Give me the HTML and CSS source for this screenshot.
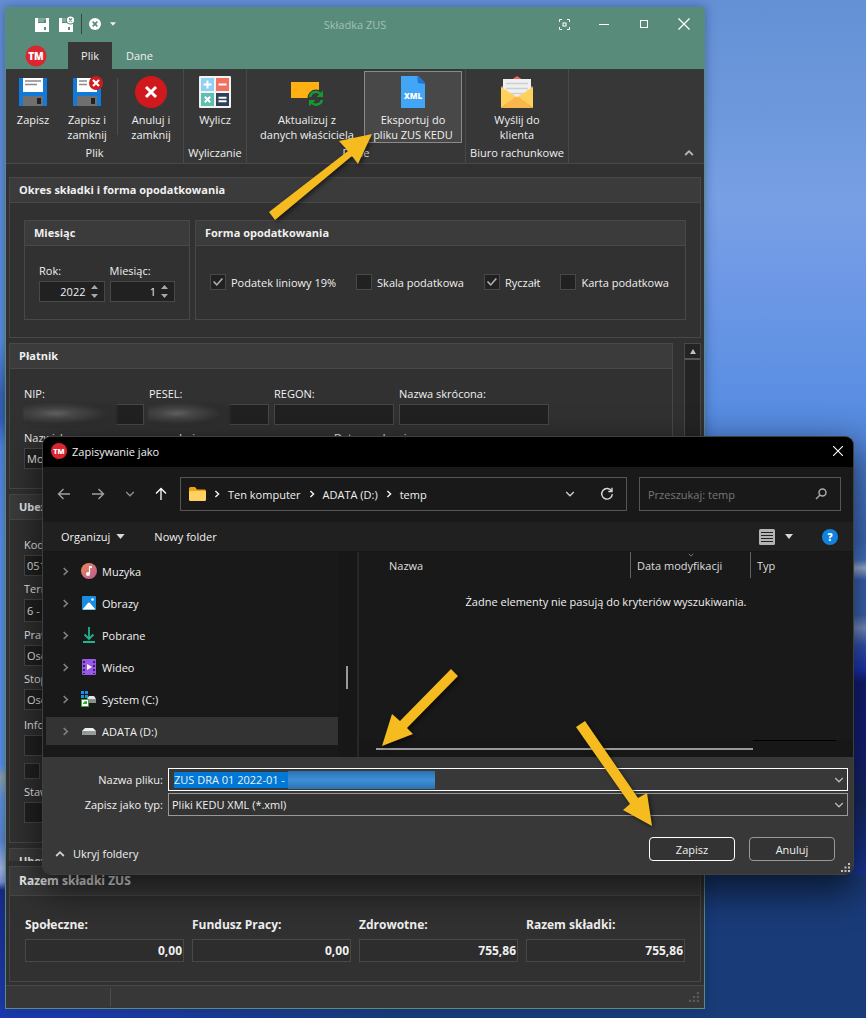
FILE: index.html
```html
<!DOCTYPE html>
<html lang="pl">
<head>
<meta charset="utf-8">
<title>Składka ZUS</title>
<link rel="stylesheet" href="styles.css">
</head>
<body>
<svg class="defs" aria-hidden="true">
  <symbol id="chev-right" viewBox="0 0 10 10"><path d="M3 1.2 7 5 3 8.800" fill="none" stroke="currentColor" stroke-width="1.800"/></symbol>
  <symbol id="chev-down" viewBox="0 0 10 10"><path d="M1.200 3 5 6.800 8.800 3" fill="none" stroke="currentColor" stroke-width="1.300"/></symbol>
  <symbol id="chev-up" viewBox="0 0 10 10"><path d="M1.200 7 5 3.200 8.800 7" fill="none" stroke="currentColor" stroke-width="1.800"/></symbol>
  <symbol id="caret" viewBox="0 0 10 6"><path d="M0 0H10L5 6z" fill="currentColor"/></symbol>
  <symbol id="spin" viewBox="0 0 7 13"><path d="M0 4 3.500 0 7 4zM0 9 3.500 13 7 9z" fill="#a8a8a8"/></symbol>
  <symbol id="grip" viewBox="0 0 9 9"><path d="M7 0h2v2H7zM7 3.500h2v2H7zM3.500 3.500h2v2h-2zM7 7h2v2H7zM3.500 7h2v2h-2zM0 7h2v2H0z" fill="currentColor"/></symbol>
</svg>

<div class="desktop">
  <main class="window">
    <header class="titlebar">
      <div class="quick">
        <button type="button" aria-label="Zapisz"><svg width="15" height="15" viewBox="0 0 15 15"><path d="M0 1h14v14H0z" fill="#fff"/><path d="M3 1h8v5H3z" fill="#588b7a"/><path d="M3 2h8M3 4h6" stroke="#a9c6bb"/><path d="M9 10h2v3H9z" fill="#588b7a"/></svg></button>
        <button type="button" aria-label="Zapisz i zamknij"><svg width="16" height="16" viewBox="0 0 16 16"><path d="M0 2h14v14H0z" fill="#fff"/><path d="M3 2h6v5H3z" fill="#588b7a"/><path d="M3 3h5M3 5h4" stroke="#a9c6bb"/><path d="M9 11h2v3H9z" fill="#588b7a"/><circle cx="11.500" cy="4" r="4.500" fill="#588b7a"/><circle cx="11.500" cy="4" r="3.600" fill="#fff"/><path d="m10 2.500 3 3m0-3-3 3" stroke="#588b7a" stroke-width="1.100"/></svg></button>
        <i class="quick-sep"></i>
        <button type="button" aria-label="Anuluj"><svg width="12" height="12" viewBox="0 0 12 12"><circle cx="6" cy="6" r="6" fill="#fff"/><path d="m3.700 3.700 4.600 4.600m0-4.600L3.700 8.300" stroke="#588b7a" stroke-width="1.700"/></svg></button>
        <button type="button" aria-label="Dostosuj"><svg width="6" height="4"><use href="#caret"/></svg></button>
      </div>
      <h1>Składka ZUS</h1>
      <div class="caption">
        <button type="button" aria-label="Tryb skupienia"><svg width="11" height="11" viewBox="0 0 11 11" fill="none" stroke="#fff"><path d="M.5 3V.5H3M8 .5h2.500V3M10.500 8v2.500H8M3 10.500H.5V8"/><rect x="4" y="4" width="3" height="3"/></svg></button>
        <button type="button" aria-label="Minimalizuj"><svg width="10" height="10"><path d="M0 5.500h10" stroke="#fff"/></svg></button>
        <button type="button" aria-label="Maksymalizuj"><svg width="8" height="8"><rect x=".5" y=".5" width="7" height="7" fill="none" stroke="#fff"/></svg></button>
        <button type="button" aria-label="Zamknij"><svg width="12" height="12"><path d="m.5.5 11 11m0-11-11 11" stroke="#fff" stroke-width="1.300"/></svg></button>
      </div>
    </header>
    <nav class="tabs">
      <svg class="app-logo" width="22" height="22" viewBox="0 0 22 22"><circle cx="11" cy="11" r="10.500" fill="#dc2530"/><text class="mark" x="11" y="15">TM</text></svg>
      <a class="tab active" href="#plik">Plik</a>
      <a class="tab" href="#dane">Dane</a>
    </nav>

    <section class="ribbon">
      <div class="rgroup g-plik">
        <div class="rbuttons">
          <button type="button" class="rb b1"><svg width="32" height="32" viewBox="0 0 32 32"><path d="M2 2h28v28H2z" fill="#1279d8"/><path d="M6 2h20v14H6z" fill="#fff"/><path d="M8 5h16M8 8.500h12" stroke="#8b8b8b" stroke-width="1.500"/><path d="M6 20h20v10H6z" fill="#6f6f6f"/><path d="M20 22h4v6h-4z" fill="#222"/></svg><span>Zapisz</span></button>
          <button type="button" class="rb b2"><svg width="32" height="32" viewBox="0 0 32 32"><path d="M2 2h28v28H2z" fill="#1279d8"/><path d="M6 2h20v14H6z" fill="#fff"/><path d="M8 5h8M8 8.500h8" stroke="#8b8b8b" stroke-width="1.500"/><path d="M6 20h20v10H6z" fill="#6f6f6f"/><path d="M20 22h4v6h-4z" fill="#222"/><circle cx="25" cy="7" r="7" fill="#d01a1e"/><path d="m22 4 6 6m0-6-6 6" stroke="#fff" stroke-width="2.200"/></svg><span>Zapisz i<br>zamknij</span></button>
          <i class="rsep"></i>
          <button type="button" class="rb b3"><svg width="32" height="32" viewBox="0 0 32 32"><circle cx="16" cy="16" r="16" fill="#cf191d"/><path d="m11 11 10 10m0-10L11 21" stroke="#fff" stroke-width="3"/></svg><span>Anuluj i<br>zamknij</span></button>
        </div>
        <h2>Plik</h2>
      </div>
      <div class="rgroup g-wyl">
        <div class="rbuttons">
          <button type="button" class="rb"><svg width="32" height="32" viewBox="0 0 32 32"><rect width="32" height="32" rx="1" fill="#f3f3f3"/><path d="M2 2h13v13H2z" fill="#8fd1f5"/><path d="M17 2h13v13H17z" fill="#f1705f"/><path d="M2 17h13v13H2z" fill="#5ebfae"/><path d="M17 17h13v13H17z" fill="#2f4059"/><path d="M8.500 4.500v8m-4-4h8M19.500 8.500h8M19.500 21.800h8M19.500 25.300h8" stroke="#fff" stroke-width="2"/><path d="m5.800 20.800 5.400 5.400m0-5.400-5.400 5.400" stroke="#fff" stroke-width="2"/></svg><span>Wylicz</span></button>
        </div>
        <h2>Wyliczanie</h2>
      </div>
      <div class="rgroup g-dane">
        <div class="rbuttons">
          <button type="button" class="rb wide"><svg width="32" height="32" viewBox="0 0 32 32"><path d="M0 6h28v16H0z" fill="#ffb012"/><circle cx="25" cy="22" r="8.500" fill="#373737"/><g fill="none" stroke="#149a32" stroke-width="2.400"><path d="M19 21a6 6 0 0 1 10.500-3M31 24a6 6 0 0 1-10.500 2.500"/></g><path d="M32 14.500V21h-6.500zM18 30.500V24h6.500z" fill="#149a32"/></svg><span>Aktualizuj z<br>danych właściciela</span></button>
          <button type="button" class="rb wide hot"><svg width="32" height="32" viewBox="0 0 32 32"><path d="M4 0h17l7 7v25H4z" fill="#42a5f5"/><path d="M20 0l8 7v1l-7-1z" fill="#1976d2"/><text class="mark" x="16" y="23">XML</text></svg><span>Eksportuj do<br>pliku ZUS KEDU</span></button>
        </div>
        <h2>Dane</h2>
      </div>
      <div class="rgroup g-biuro">
        <div class="rbuttons">
          <button type="button" class="rb wide"><svg width="32" height="32" viewBox="0 0 32 32"><path d="M0 11 16 0l16 11v8H0z" fill="#ee6a5b"/><path d="M2 3h28v20H2z" fill="#efefef"/><path d="M5 7.500h22M5 12.500h22M10 17.500h12" stroke="#c9d0d6" stroke-width="1.500"/><path d="M0 11v21L16 21zM32 11v21L16 21z" fill="#ffd15c"/><path d="M0 32 13 22q3-2 6 0l13 10z" fill="#f8b64c"/></svg><span>Wyślij do<br>klienta</span></button>
        </div>
        <h2>Biuro rachunkowe</h2>
      </div>
      <button type="button" class="collapse" aria-label="Zwiń wstążkę"><svg width="10" height="10"><use href="#chev-up"/></svg></button>
    </section>

    <div class="content">
      <section class="panel period">
        <h3>Okres składki i forma opodatkowania</h3>
        <div class="period-body">
          <section class="panel month">
            <h3>Miesiąc</h3>
            <div class="month-body">
              <div class="field"><label for="rok">Rok:</label><div class="spinbox"><input id="rok" value="2022"><svg width="7" height="13"><use href="#spin"/></svg></div></div>
              <div class="field"><label for="mies">Miesiąc:</label><div class="spinbox"><input id="mies" value="1"><svg width="7" height="13"><use href="#spin"/></svg></div></div>
            </div>
          </section>
          <section class="panel form-tax">
            <h3>Forma opodatkowania</h3>
            <div class="checks">
              <label><input type="checkbox" checked>Podatek liniowy 19%</label>
              <label><input type="checkbox">Skala podatkowa</label>
              <label><input type="checkbox" checked>Ryczałt</label>
              <label><input type="checkbox">Karta podatkowa</label>
            </div>
          </section>
        </div>
      </section>

      <div class="scroll">
        <div class="scroll-body">
          <section class="panel payer">
            <h3>Płatnik</h3>
            <div class="rows">
              <div class="row">
                <div class="field id"><label for="nip">NIP:</label><div class="masked"><input id="nip"><i></i></div></div>
                <div class="field id"><label for="pesel">PESEL:</label><div class="masked short"><input id="pesel"><i></i></div></div>
                <div class="field id"><label for="regon">REGON:</label><input id="regon"></div>
                <div class="field long"><label for="skr">Nazwa skrócona:</label><input id="skr"></div>
              </div>
              <div class="row">
                <div class="field long"><label for="nazw">Nazwisko:</label><input id="nazw" value="Mo"></div>
                <div class="field long"><label for="imie">Imię:</label><input id="imie"></div>
                <div class="field long"><label for="ur">Data urodzenia:</label><input id="ur"></div>
              </div>
            </div>
          </section>
          <section class="panel insured">
            <h3>Ubez</h3>
            <div class="rows">
              <div class="field"><label for="kod">Kod</label><input id="kod" value="051"></div>
              <div class="field tall"><label for="term">Term</label><input id="term" value="6 -"></div>
              <div class="field"><label for="prawo">Praw</label><input id="prawo" value="Oso"></div>
              <div class="field"><label for="stop">Stop</label><input id="stop" value="Oso"></div>
              <div class="field spaced"><label for="info">Info</label><input id="info"></div>
              <input class="spaced" type="checkbox" aria-label="Info">
              <div class="field"><label for="staw">Staw</label><input id="staw"></div>
            </div>
          </section>
          <section class="panel next"><h3>Ubez</h3></section>
        </div>
        <div class="vscroll"><button type="button" aria-label="W górę"><svg width="6" height="5" viewBox="0 0 6 5"><path d="M0 5 3 0l3 5z" fill="#c0c0c0"/></svg></button><div class="vthumb"></div></div>
      </div>

      <section class="panel totals">
        <h3>Razem składki ZUS</h3>
        <div class="totals-body">
          <div class="total"><label for="t1">Społeczne:</label><input id="t1" value="0,00" readonly></div>
          <div class="total"><label for="t2">Fundusz Pracy:</label><input id="t2" value="0,00" readonly></div>
          <div class="total"><label for="t3">Zdrowotne:</label><input id="t3" value="755,86" readonly></div>
          <div class="total"><label for="t4">Razem składki:</label><input id="t4" value="755,86" readonly></div>
        </div>
      </section>
    </div>
    <footer class="statusbar"><i></i><svg width="10" height="10"><use href="#grip"/></svg></footer>
  </main>

  <div class="dialog" role="dialog" aria-labelledby="dlg-title">
    <header class="dlg-title">
      <svg width="16" height="16" viewBox="0 0 22 22"><circle cx="11" cy="11" r="11" fill="#dc2530"/><text class="mark" x="11" y="15">TM</text></svg>
      <h2 id="dlg-title">Zapisywanie jako</h2>
      <button type="button" aria-label="Zamknij"><svg width="10" height="10"><path d="m0 0 10 10M10 0 0 10" stroke="#fff" stroke-width="1.100"/></svg></button>
    </header>
    <div class="navbar">
      <div class="nav-buttons">
        <button type="button" aria-label="Wstecz"><svg width="14" height="12" viewBox="0 0 14 12" fill="none" stroke="#a0a0a0" stroke-width="1.400"><path d="M13 6H1.500M6.500 1l-5 5 5 5"/></svg></button>
        <button type="button" aria-label="Dalej"><svg width="14" height="12" viewBox="0 0 14 12" fill="none" stroke="#a0a0a0" stroke-width="1.400"><path d="M1 6h11.500M7.500 1l5 5-5 5"/></svg></button>
        <button type="button" aria-label="Ostatnie"><svg class="grey" width="10" height="10"><use href="#chev-down"/></svg></button>
        <button type="button" aria-label="W górę"><svg width="12" height="14" viewBox="0 0 12 14" fill="none" stroke="#fff" stroke-width="1.300"><path d="M6 13V1.500M1 6.500l5-5 5 5"/></svg></button>
      </div>
      <div class="path">
        <svg width="17" height="14" viewBox="0 0 17 14"><path d="M0 1.500Q0 0 1.500 0H6l2 2.500h7.500Q17 2.500 17 4v3H0z" fill="#f5a30c"/><rect y="4" width="17" height="10" rx="1.200" fill="#ffd062"/></svg>
        <svg width="8" height="8"><use href="#chev-right"/></svg><a href="#pc">Ten komputer</a>
        <svg width="8" height="8"><use href="#chev-right"/></svg><a href="#d">ADATA (D:)</a>
        <svg width="8" height="8"><use href="#chev-right"/></svg><a href="#temp">temp</a>
        <span class="grow"></span>
        <button type="button" aria-label="Historia"><svg width="10" height="10"><use href="#chev-down"/></svg></button>
        <button type="button" aria-label="Odśwież"><svg width="14" height="14" viewBox="0 0 14 14" fill="none" stroke="#d8d8d8" stroke-width="1.400"><path d="M11.500 4A5.300 5.300 0 1 0 12.300 7M12 .8v3.700H8.300"/></svg></button>
      </div>
      <div class="search"><input type="text" placeholder="Przeszukaj: temp" aria-label="Przeszukaj"><svg width="12" height="12" viewBox="0 0 12 12" fill="none" stroke="#a8a8a8" stroke-width="1.500"><circle cx="7.500" cy="4.500" r="3.500"/><path d="M5 7 1 11"/></svg></div>
    </div>
    <div class="toolbar">
      <button type="button" class="organize">Organizuj<svg width="9" height="5"><use href="#caret"/></svg></button>
      <button type="button">Nowy folder</button>
      <span class="grow"></span>
      <button type="button" class="view" aria-label="Widok"><svg width="16" height="16" viewBox="0 0 16 16"><rect width="16" height="16" rx="1.500" fill="#b4b4b4"/><path d="M2 3.500h12M2 6.500h12M2 9.500h12M2 12.500h12" stroke="#222"/></svg><svg width="8" height="5"><use href="#caret"/></svg></button>
      <button type="button" aria-label="Pomoc"><svg width="16" height="16"><circle cx="8" cy="8" r="8" fill="#0f83dd"/><text class="mark help" x="8" y="12">?</text></svg></button>
    </div>
    <div class="browser">
      <ul class="tree">
        <li><svg width="9" height="9"><use href="#chev-right"/></svg><svg width="16" height="16"><defs><linearGradient id="mg" x2="1" y2="1"><stop stop-color="#f08a4b"/><stop offset="1" stop-color="#b45a9c"/></linearGradient></defs><circle cx="8" cy="8" r="8" fill="url(#mg)"/><path d="M8.500 3.500v7" stroke="#fff" stroke-width="1.200"/><circle cx="7" cy="11" r="2" fill="#fff"/><path d="M8 3h3v2H8z" fill="#fff"/></svg><a href="#m">Muzyka</a></li>
        <li><svg width="9" height="9"><use href="#chev-right"/></svg><svg width="16" height="16"><rect x="1" y="1" width="14" height="14" rx="1" fill="#178ce0"/><path d="M1.500 14.500 7 8q1-1 2 0l5.500 6.500z" fill="#fff"/><circle cx="11.500" cy="4.500" r="1.300" fill="#fff"/></svg><a href="#o">Obrazy</a></li>
        <li><svg width="9" height="9"><use href="#chev-right"/></svg><svg width="16" height="16" fill="none" stroke="#1fb58f" stroke-width="1.800"><path d="M8 0v11.500M3.500 7.500 8 12l4.500-4.500M2 15h12"/></svg><a href="#p">Pobrane</a></li>
        <li><svg width="9" height="9"><use href="#chev-right"/></svg><svg width="16" height="16"><rect x="1" width="14" height="16" rx="1" fill="#9a58ea"/><path d="M3 2v13M13 2v13" stroke="#35284f" stroke-width="2" stroke-dasharray="2 2"/><path d="m6 5 5 3-5 3z" fill="#fff"/></svg><a href="#w">Wideo</a></li>
        <li><svg width="9" height="9"><use href="#chev-right"/></svg><svg width="16" height="16"><path d="M0 0h3v3H0zM4 0h3v3H4zM0 4h3v3H0zM4 4h3v3H4z" fill="#1e90e6"/><path d="M8 5h5l2 3H6z" fill="#e4e4e4"/><path d="M7 8h8v4H7z" fill="#8b8b8b"/><path d="M.5 8.500h7v7h-7z" fill="#fff" stroke="#36a839"/><path d="M2 13q0-3 4-3v3z" fill="#36a839"/></svg><a href="#c">System (C:)</a></li>
        <li class="sel"><svg width="9" height="9"><use href="#chev-right"/></svg><svg width="16" height="16"><path d="M4 5h8l3 3H1z" fill="#ededed"/><path d="M1 8h14v4H1z" fill="#9a9a9a"/><path d="M3 9.500h2" stroke="#19c24d"/></svg><a href="#d">ADATA (D:)</a></li>
      </ul>
      <div class="tree-scroll"><i></i></div>
      <div class="files">
        <div class="cols"><span class="c1">Nazwa</span><span class="c2">Data modyfikacji<svg width="8" height="6"><use href="#chev-down"/></svg></span><span class="c3">Typ</span></div>
        <p>Żadne elementy nie pasują do kryteriów wyszukiwania.</p>
        <div class="hscroll"><i></i></div>
      </div>
    </div>
    <div class="dlg-footer">
      <div class="line"><label for="fname">Nazwa pliku:</label><div class="combo active"><input id="fname" value="ZUS DRA 01 2022-01 -"><i class="blurred"></i><span class="grow"></span><svg width="10" height="10"><use href="#chev-down"/></svg></div></div>
      <div class="line"><label for="ftype">Zapisz jako typ:</label><div class="combo"><select id="ftype"><option>Pliki KEDU XML (*.xml)</option></select><svg width="10" height="10"><use href="#chev-down"/></svg></div></div>
      <div class="actions">
        <button type="button" class="hide"><svg width="10" height="10"><use href="#chev-up"/></svg>Ukryj foldery</button>
        <span class="grow"></span>
        <button type="button" class="btn primary">Zapisz</button>
        <button type="button" class="btn">Anuluj</button>
      </div>
      <svg class="dlg-grip" width="9" height="9"><use href="#grip"/></svg>
    </div>
  </div>

  <svg class="arrows" width="866" height="1018" viewBox="0 0 866 1018" aria-hidden="true">
    <g fill="#f5bb1f">
      <path d="m269 212 79-61-9-10 33-7-14 30-6-8-77 64z"/>
      <path d="m382 746 10-32 8 7 51-52 7 7-51 52 6 6z"/>
      <path d="m576 727 9-6 53 77 9-5 5 33-29-16 7-6z"/>
    </g>
  </svg>
</div>
</body>
</html>
```
FILE: styles.css
```css
* { box-sizing: border-box; }
body { margin: 0; font: 11px/15px "Open Sans", "Noto Sans", sans-serif; color: #f0f0f0; }
h1, h2, h3, p, ul { margin: 0; padding: 0; font-size: inherit; font-weight: 400; list-style: none; }
button { background: none; border: 0; padding: 0; color: inherit; font: inherit; display: flex; align-items: center; justify-content: center; }
input, select { font: inherit; color: inherit; margin: 0; min-width: 0; }
a { color: inherit; text-decoration: none; }
svg { flex: none; display: block; }
.defs { position: absolute; width: 0; height: 0; }
.grow { flex: 1; }
.mark { font-size: 10px; font-weight: 800; text-anchor: middle; fill: #fff; }
.rb .mark { font-size: 8px; }

.desktop {
  position: relative;
  height: 100vh;
  min-height: 1018px;
  padding: 7px 161px 9px 5px;
  display: flex;
  overflow: hidden;
  background:
    linear-gradient(90deg, transparent 60px, #193b78 400px) 0 100% / 100% 143px no-repeat,
    linear-gradient(180deg, #648fd3 0, #5b8ee0 340px, #3a62b0 395px, #3560b8 420px, #5385da 445px, #5a90e8 550px, #5a90e8 765px, #8fa3a8 777px, #5f90dc 800px, #5b86d0 840px, #a5b8e0 868px, #7f97d8 882px, #1a2a88 890px, #1d39b0 100%) 0 0 / 5px 100% no-repeat,
    linear-gradient(180deg, #6490d5 0, #6d98dc 110px, #78a0e4 200px, #6f99e6 275px, #5a8ee2 400px, #3f70c4 540px, #4a7ed0 560px, #a8bce2 568px, #3c66bd 580px, #3f69b8 615px, #7f97cc 628px, #3558bd 645px, #1b37b8 670px, #141f78 682px, #161f7c 740px, #152a66 800px, #1c3aa8 890px, #1c39ae 100%);
}

.window {
  flex: 1;
  display: flex;
  flex-direction: column;
  background: #313131;
  border: 1px solid #5a8c7b;
  box-shadow: 0 0 10px rgba(20, 40, 90, .45);
}
.titlebar { height: 34px; padding-bottom: 2px; background: #588b7a; display: grid; grid-template-columns: 1fr auto 1fr; align-items: center; }
.titlebar h1 { color: #a0c1b5; }
.quick { display: flex; align-items: center; padding-left: 29px; gap: 9px; }
.quick-sep { width: 1px; height: 20px; background: #2f4a41; margin: 0 -2px 0 -3px; }
.caption { display: flex; justify-content: flex-end; }
.caption button { width: 40px; height: 30px; }
.tabs { height: 27px; background: #588b7a; display: flex; align-items: center; padding-left: 19px; }
.app-logo { margin-right: 21px; }
.tab { padding: 6px 14px; }
.tab.active { background: #373737; padding: 6px 0; width: 44px; text-align: center; }

.ribbon { height: 95px; display: flex; background: #373737; border-bottom: 1px solid #484848; position: relative; }
.rgroup { display: flex; flex-direction: column; align-items: center; border-right: 1px solid #484848; }
.rgroup h2 { white-space: nowrap; }
.rbuttons { height: 76px; padding-top: 2px; display: flex; justify-content: center; }
.rb { flex-direction: column; justify-content: flex-start; align-items: center; height: 72px; padding-top: 4px; border: 1px solid transparent; gap: 4px; text-align: center; white-space: nowrap; }
.rb.hot { background: #484848; border-color: #8a8a8a; }
.g-plik { width: 178px; }
.g-wyl { width: 63px; }
.g-dane { width: 219px; }
.g-biuro { width: 103px; }
.b1, .b2 { width: 54px; }
.b3 { width: 64px; }
.rsep { width: 1px; height: 57px; background: #4c4c4c; margin: 7px 1px 0 3px; }
.wide { width: 98px; }
.g-dane .rbuttons { gap: 8px; padding-left: 8px; }
.collapse { position: absolute; right: 10px; bottom: 5px; color: #b8b8b8; }

.content { flex: 1; min-height: 0; padding: 13px 3px 3px; display: flex; flex-direction: column; gap: 5px; }
.panel { border: 1px solid #484848; }
.panel h3 { height: 25px; background: #3b3b3b; border-bottom: 1px solid #484848; padding: 4px 9px; font-weight: 700; }
.period-body { padding: 17px 14px; display: flex; gap: 5px; }
.month { width: 166px; height: 100px; }
.form-tax { flex: 1; }
.month-body { padding: 17px 14px; display: flex; gap: 5px; }
.field { display: flex; flex-direction: column; gap: 3px; white-space: nowrap; }
.field input:not([type=checkbox]) { width: 100%; height: 21px; background: #212121; border: 1px solid #484848; padding: 0 2px; }
.month-body .field { width: 66px; }
.spinbox { display: flex; align-items: center; height: 21px; background: #212121; border: 1px solid #484848; padding-right: 6px; gap: 3px; }
.field .spinbox input:not([type=checkbox]) { background: none; border: 0; height: 19px; text-align: right; }
.checks { height: 72px; display: flex; align-items: center; gap: 20px; padding-left: 14px; white-space: nowrap; }
.checks label { display: flex; align-items: center; gap: 5px; }
input[type=checkbox] { appearance: none; width: 16px; height: 16px; background: #212121; border: 1px solid #484848; display: grid; place-content: center; flex: none; }
input[type=checkbox]:checked::before { content: ""; width: 10px; height: 8px; background: #b0b0b0; clip-path: polygon(0 50%, 12% 38%, 38% 72%, 88% 0, 100% 12%, 38% 100%); }

.scroll { flex: 1; min-height: 0; display: flex; gap: 11px; }
.scroll-body { flex: 1; min-width: 0; overflow: hidden; display: flex; flex-direction: column; gap: 5px; }
.scroll-body .panel { flex: none; }
.payer { height: 146px; }
.insured { height: 349px; }
.rows { padding: 17px 14px; display: flex; flex-direction: column; gap: 5px; }
.payer .row { display: flex; gap: 5px; }
.id { width: 120px; }
.long { width: 150px; }
.insured .field { width: 180px; }
.insured .tall input:not([type=checkbox]) { height: 23px; }
.spaced { margin-top: 2px; }
.masked { position: relative; }
.masked i { position: absolute; inset: -1px auto -1px -1px; width: 94px; background: radial-gradient(ellipse at 35% 45%, #646464 0, #484848 22%, #2e2e2e 60%, #303030 100%); filter: blur(1px); }
.masked.short i { width: 82px; }
.vscroll { width: 17px; border: 1px solid #484848; background: #242424; display: flex; flex-direction: column; }
.vscroll button { height: 16px; border-bottom: 2px solid #555; }
.vthumb { flex: 1; }

.totals { height: 116px; font-size: 12px; }
.totals h3 { height: 29px; padding-top: 6px; }
.totals-body { padding: 21px 15px 0; display: flex; gap: 8px; }
.total { flex: 0 0 159px; display: flex; flex-direction: column; gap: 7px; font-weight: 700; }
.total input { height: 23px; background: #2d2d2d; border: 1px solid #484848; padding: 0 1px; text-align: right; }
.statusbar { height: 23px; border-top: 1px solid #484848; background: #373737; display: flex; justify-content: space-between; align-items: center; padding-right: 5px; color: #5a5a5a; }
.statusbar i { width: 105px; height: 19px; border-right: 1px solid #4c4c4c; }

.dialog {
  position: absolute;
  left: 43px;
  right: 13px;
  top: 437px;
  border-radius: 8px;
  background: #191919;
  box-shadow: 0 0 0 1px #3f3f3f, 0 14px 36px 4px rgba(0, 0, 0, .6);
  overflow: hidden;
}
.dlg-title { height: 30px; background: #000; display: flex; align-items: center; gap: 5px; padding: 0 10px 2px 8px; }
.dlg-title h2 { flex: 1; }
.navbar { height: 55px; display: flex; padding: 10px 12px 11px 14px; gap: 10px; }
.nav-buttons { display: flex; align-items: center; gap: 20px; width: 113px; }
.grey { color: #909090; }
.path, .search { border: 1px solid #555; display: flex; align-items: center; }
.path { flex: 1; padding: 0 12px 0 8px; gap: 7px; }
.path button { width: 14px; margin-left: 16px; color: #d0d0d0; }
.search { width: 202px; padding: 0 13px 0 8px; margin-left: 2px; }
.search input { flex: 1; border: 0; background: none; padding: 0; }
.search input::placeholder { color: #777; opacity: 1; }
.toolbar { height: 30px; background: #202020; border-bottom: 1px solid #161616; display: flex; align-items: center; gap: 29px; padding: 0 15px 0 18px; }
.organize { gap: 6px; }
.toolbar .organize svg, .view { color: #d8d8d0; }
.view { gap: 10px; }
.browser { height: 205px; display: flex; }
.tree { width: 295px; padding: 5px 0 0 3px; display: flex; flex-direction: column; gap: 4px; }
.tree li { height: 28px; display: flex; align-items: center; padding-left: 15px; gap: 5px; }
.tree li svg:first-child { color: #808080; margin-right: 6px; }
.tree .sel { background: #333; }
.tree-scroll { width: 21px; padding: 114px 0 0 8px; background: #171717; border-right: 2px solid #272727; }
.tree-scroll i { display: block; width: 2px; height: 23px; background: #9a9a9a; }
.files { flex: 1; display: flex; flex-direction: column; }
.cols { display: flex; height: 26px; color: #dedede; line-height: 28px; }
.c1 { width: 271px; padding-left: 30px; }
.c2 { width: 120px; border-left: 1px solid #636363; padding-left: 6px; position: relative; }
.c2 svg { position: absolute; left: 56px; top: 0; color: #909090; }
.c3 { border-left: 1px solid #636363; padding-left: 6px; }
.files p { flex: 1; padding-top: 16px; text-align: center; }
.hscroll { height: 17px; padding: 8px 100px 0 17px; background: #171717; position: relative; }
.hscroll::after { content: ""; position: absolute; right: 17px; top: 0; width: 83px; height: 1px; background: #000; }
.hscroll i { display: block; height: 2px; background: #9a9a9a; }
.dlg-footer { background: #383838; padding: 11px 5px 13px 0; position: relative; }
.line { display: flex; align-items: center; gap: 5px; margin-bottom: 2px; }
.line label { width: 120px; text-align: right; }
.combo { flex: 1; height: 23px; border: 1px solid #999; background: #333; display: flex; align-items: center; padding: 0 3px; }
.combo svg { color: #b8b8b8; }
.combo.active { border-color: #fff; background: #383838; padding-left: 5px; }
.combo select { appearance: none; border: 0; background: none; flex: 1; padding: 0; }
#fname { width: 114px; height: 16px; padding: 0; border: 0; background: #0078d7; }
.blurred { width: 147px; height: 18px; background: linear-gradient(180deg, #2a72b0, #3f8fd8 50%, #2a72b0); }
.actions { display: flex; align-items: flex-end; gap: 14px; padding: 19px 13px 0 12px; }
.hide { gap: 8px; }
.hide svg { color: #d0d0d0; }
.btn { width: 86px; height: 24px; border: 1px solid #999; border-radius: 4px; background: #333; }
.btn.primary { border-color: #fff; }
.dlg-grip { position: absolute; right: 3px; bottom: 2px; color: #c0c0c0; }

.arrows { position: absolute; left: 0; top: 0; pointer-events: none; filter: drop-shadow(2px 2px 2px rgba(0, 0, 0, .5)); }
```
